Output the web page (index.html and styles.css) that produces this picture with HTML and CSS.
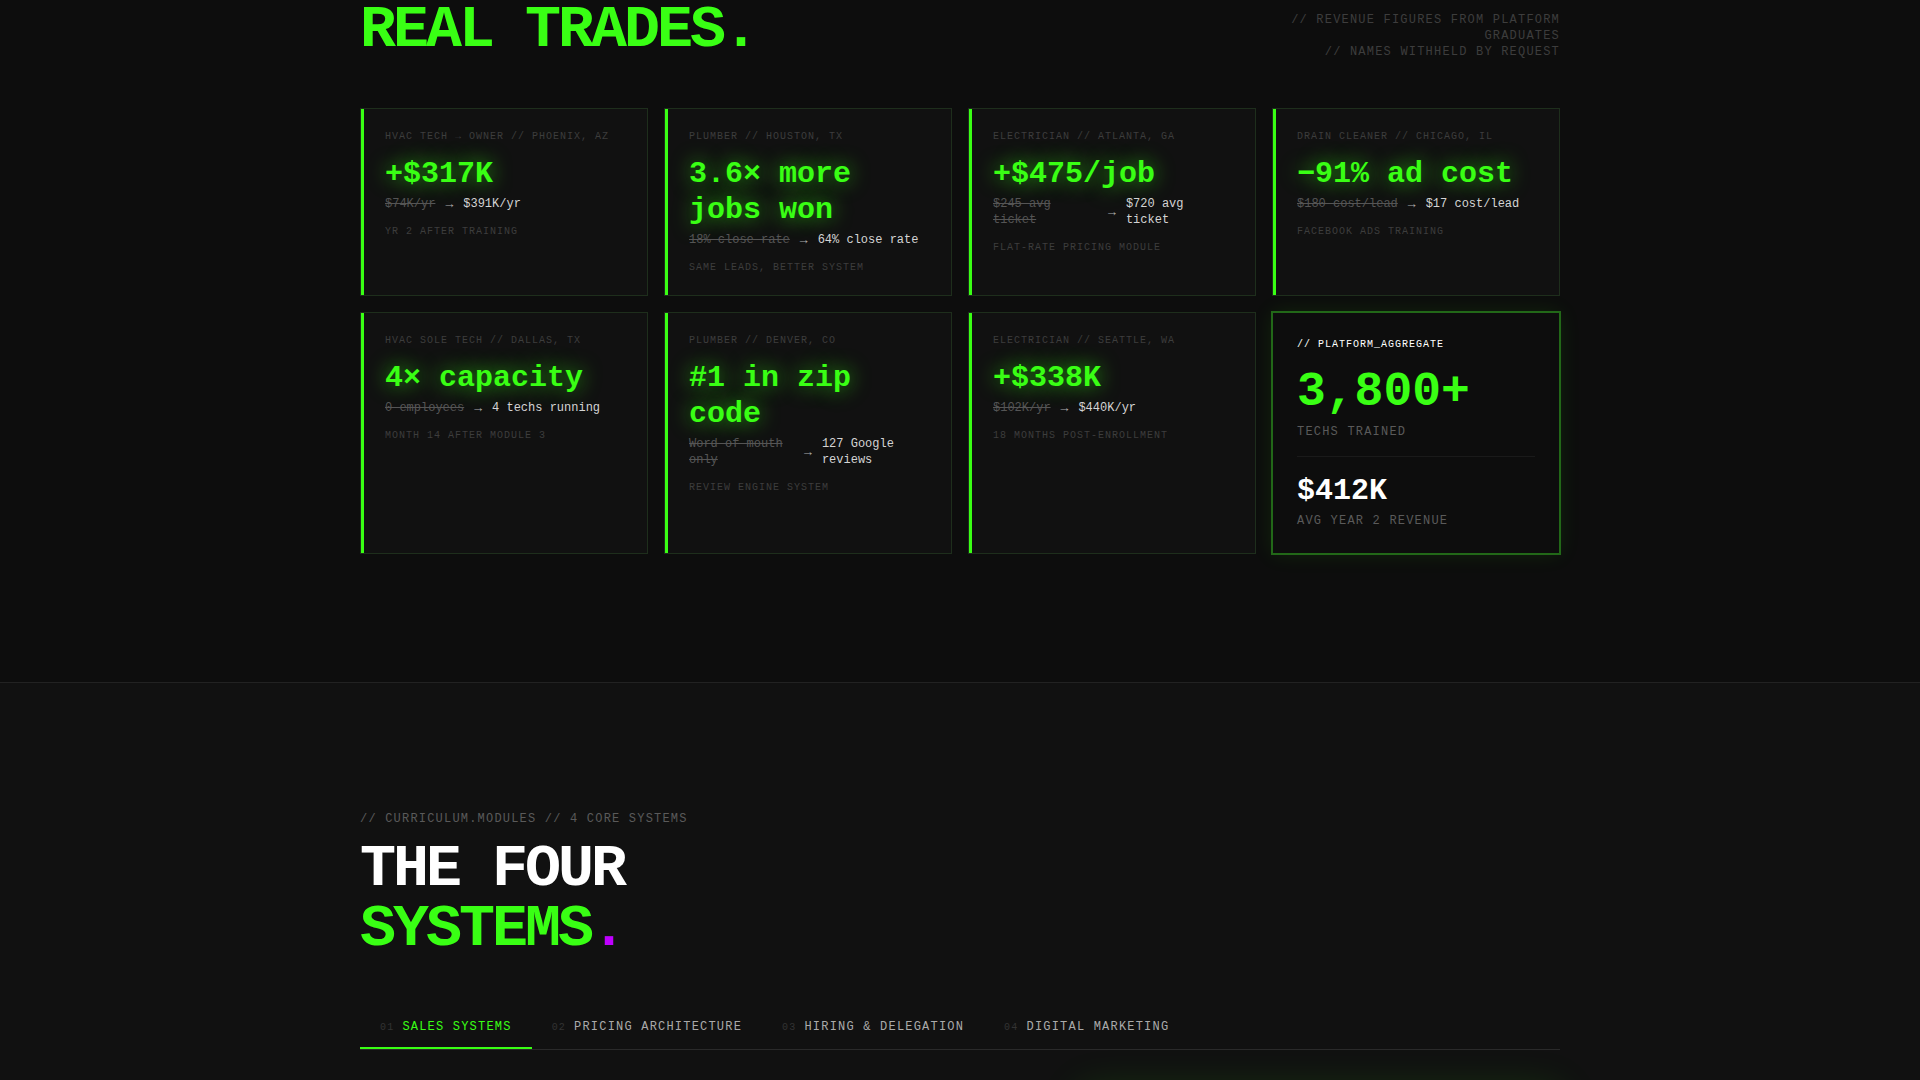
FILE: index.html
```html
<!DOCTYPE html>
<html lang="en">
<head>
  <meta charset="UTF-8">
  <meta name="viewport" content="width=device-width, initial-scale=1.0">
  <title>Real Trades</title>
  <link rel="stylesheet" href="styles.css">
</head>
<body>
  <section class="results">
    <div class="container">
      <div class="results-header">
        <h2 class="title accent">REAL TRADES.</h2>
        <p class="results-note">// REVENUE FIGURES FROM PLATFORM GRADUATES<br>// NAMES WITHHELD BY REQUEST</p>
      </div>

      <div class="results-grid">
        <article class="card">
          <p class="card-label">HVAC TECH → OWNER // PHOENIX, AZ</p>
          <p class="card-value">+$317K</p>
          <div class="card-change"><s>$74K/yr</s><span class="arrow">→</span><span class="after">$391K/yr</span></div>
          <p class="card-meta">YR 2 AFTER TRAINING</p>
        </article>
        <article class="card">
          <p class="card-label">PLUMBER // HOUSTON, TX</p>
          <p class="card-value">3.6× more jobs won</p>
          <div class="card-change"><s>18% close rate</s><span class="arrow">→</span><span class="after">64% close rate</span></div>
          <p class="card-meta">SAME LEADS, BETTER SYSTEM</p>
        </article>
        <article class="card">
          <p class="card-label">ELECTRICIAN // ATLANTA, GA</p>
          <p class="card-value">+$475/job</p>
          <div class="card-change"><s>$245 avg ticket</s><span class="arrow">→</span><span class="after">$720 avg ticket</span></div>
          <p class="card-meta">FLAT-RATE PRICING MODULE</p>
        </article>
        <article class="card">
          <p class="card-label">DRAIN CLEANER // CHICAGO, IL</p>
          <p class="card-value">−91% ad cost</p>
          <div class="card-change"><s>$180 cost/lead</s><span class="arrow">→</span><span class="after">$17 cost/lead</span></div>
          <p class="card-meta">FACEBOOK ADS TRAINING</p>
        </article>
        <article class="card">
          <p class="card-label">HVAC SOLE TECH // DALLAS, TX</p>
          <p class="card-value">4× capacity</p>
          <div class="card-change"><s>0 employees</s><span class="arrow">→</span><span class="after">4 techs running</span></div>
          <p class="card-meta">MONTH 14 AFTER MODULE 3</p>
        </article>
        <article class="card">
          <p class="card-label">PLUMBER // DENVER, CO</p>
          <p class="card-value">#1 in zip code</p>
          <div class="card-change"><s>Word of mouth only</s><span class="arrow">→</span><span class="after">127 Google reviews</span></div>
          <p class="card-meta">REVIEW ENGINE SYSTEM</p>
        </article>
        <article class="card">
          <p class="card-label">ELECTRICIAN // SEATTLE, WA</p>
          <p class="card-value">+$338K</p>
          <div class="card-change"><s>$102K/yr</s><span class="arrow">→</span><span class="after">$440K/yr</span></div>
          <p class="card-meta">18 MONTHS POST-ENROLLMENT</p>
        </article>
        <article class="aggregate">
          <p class="aggregate-label">// PLATFORM_AGGREGATE</p>
          <p class="aggregate-total">3,800+</p>
          <p class="aggregate-caption">TECHS TRAINED</p>
          <hr>
          <p class="aggregate-revenue">$412K</p>
          <p class="aggregate-caption">AVG YEAR 2 REVENUE</p>
        </article>
      </div>
    </div>
  </section>

  <section class="systems">
    <div class="container">
      <p class="eyebrow">// CURRICULUM.MODULES // 4 CORE SYSTEMS</p>
      <h2 class="title">THE FOUR<br><span class="accent">SYSTEMS</span><span class="dot">.</span></h2>

      <div class="tabs" role="tablist">
        <button class="tab active" role="tab" aria-selected="true"><span class="tab-num">01</span>SALES SYSTEMS</button>
        <button class="tab" role="tab" aria-selected="false"><span class="tab-num">02</span>PRICING ARCHITECTURE</button>
        <button class="tab" role="tab" aria-selected="false"><span class="tab-num">03</span>HIRING &amp; DELEGATION</button>
        <button class="tab" role="tab" aria-selected="false"><span class="tab-num">04</span>DIGITAL MARKETING</button>
      </div>

      <div class="tab-body">
        <div class="terminal"></div>
      </div>
    </div>
  </section>
</body>
</html>
```
FILE: styles.css
```css
:root {
  --green: #39ff14;
  --purple: #bf00ff;
  --bg: #0d0d0d;
  --panel: #111111;
}

* {
  box-sizing: border-box;
  margin: 0;
  padding: 0;
}

body {
  background: var(--bg);
  color: #ffffff;
  font-family: "Liberation Mono", "Courier New", monospace;
  font-size: 12px;
  line-height: 16px;
  height: 100vh;
  overflow: hidden;
}

.container {
  max-width: 1200px;
  margin: 0 auto;
}

.title {
  font-size: 60px;
  line-height: 60px;
  font-weight: 700;
  letter-spacing: -0.05em;
}

.accent {
  color: var(--green);
}

.dot {
  color: var(--purple);
}

/* results */
.results {
  padding-bottom: 128px;
}

.results-header {
  display: flex;
  justify-content: space-between;
  align-items: flex-end;
  margin-bottom: 48px;
}

.results-note {
  max-width: 280px;
  color: #3d3d3d;
  letter-spacing: 0.1em;
  text-align: right;
}

.results-grid {
  display: grid;
  grid-template-columns: repeat(4, 1fr);
  gap: 16px;
}

.card {
  position: relative;
  background: var(--panel);
  border: 1px solid #1e2e1c;
  padding: 20px 24px 19px;
}

.card::before {
  content: "";
  position: absolute;
  top: 0;
  bottom: 0;
  left: 0;
  width: 3px;
  background: var(--green);
}

.card-label,
.card-meta {
  color: #3d3d3d;
  font-size: 10px;
  letter-spacing: 0.1em;
}

.card-value {
  margin: 11px 0 4px;
  color: var(--green);
  font-size: 30px;
  line-height: 36px;
  font-weight: 700;
  text-shadow: 0 0 20px rgba(57, 255, 20, 0.7);
}

.card-change {
  display: flex;
  align-items: center;
  gap: 10px;
  margin-bottom: 12px;
}

.card-change s {
  color: #555555;
}

.arrow {
  color: #aaaaaa;
  font-size: 13px;
  line-height: 18px;
  margin-bottom: -2px;
}

.after {
  color: #d4d4d4;
}

.aggregate {
  background: var(--bg);
  border: 1px solid #226818;
  box-shadow: 0 0 0 1px #226818, 0 0 20px rgba(57, 255, 20, 0.1);
  padding: 24px;
}

.aggregate-label {
  font-size: 10px;
  letter-spacing: 0.1em;
}

.aggregate-total {
  margin: 11px 0 3px;
  color: var(--green);
  font-size: 48px;
  line-height: 57px;
  font-weight: 700;
}

.aggregate-revenue {
  margin-bottom: 4px;
  font-size: 30px;
  line-height: 36px;
  font-weight: 700;
}

.aggregate-caption {
  color: #5a5a5a;
  letter-spacing: 0.1em;
}

.aggregate hr {
  border: none;
  border-top: 1px solid #1a1a1a;
  margin: 16px 0;
}

/* four systems */
.systems {
  background: var(--panel);
  border-top: 1px solid #222222;
  padding: 128px 0;
}

.eyebrow {
  margin-bottom: 12px;
  color: #5a5a5a;
  letter-spacing: 0.1em;
}

.tabs {
  display: flex;
  margin-top: 48px;
  border-bottom: 1px solid #2a2a2a;
}

.tab {
  background: none;
  border: none;
  border-bottom: 2px solid transparent;
  padding: 12px 20px;
  color: #aaaaaa;
  font: inherit;
  letter-spacing: 0.1em;
  cursor: pointer;
}

.tab.active {
  color: var(--green);
  border-bottom-color: var(--green);
}

.tab-num {
  margin-right: 8px;
  color: #333333;
  font-size: 10px;
  line-height: 10px;
}

.tab-body {
  display: flex;
  justify-content: flex-end;
  margin-top: 40px;
}

.terminal {
  width: 40%;
  height: 320px;
  background: var(--bg);
  border: 1px solid rgba(57, 255, 20, 0.4);
  box-shadow: 0 0 40px rgba(57, 255, 20, 0.15);
}
```
